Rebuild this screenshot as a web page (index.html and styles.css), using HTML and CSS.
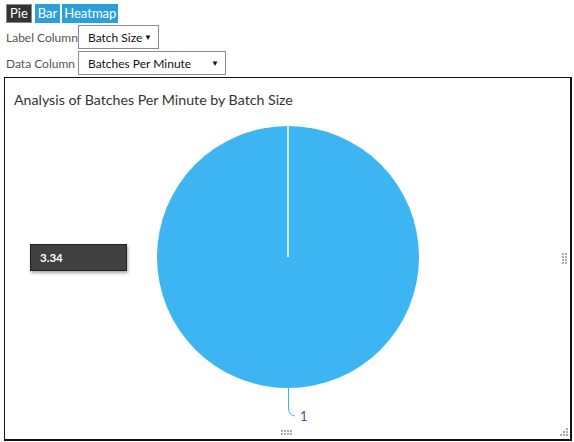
FILE: index.html
```html
<!DOCTYPE html>
<html>
<head>
<meta charset="utf-8">
<link rel="stylesheet" href="styles.css">
</head>
<body>
<div class="page">
  <div class="tabs">
    <span class="tab active">Pie</span>
    <span class="tab">Bar</span>
    <span class="tab tab-wide">Heatmap</span>
  </div>
  <div class="row">
    <span class="lbl">Label Column</span>
    <span class="select sel-label">Batch Size<span class="arrow">▼</span></span>
  </div>
  <div class="row">
    <span class="lbl">Data Column</span>
    <span class="select sel-data">Batches Per Minute<span class="arrow">▼</span></span>
  </div>
  <div class="chart">
    <div class="title">Analysis of Batches Per Minute by Batch Size</div>
    <svg class="pie" width="566" height="362" viewBox="0 0 566 362">
      <circle cx="283" cy="179" r="131" fill="#3db5f2"/>
      <line x1="283" y1="48" x2="283" y2="179" stroke="#ffffff" stroke-width="1.5"/>
      <path d="M283.5 310 L283.5 331 Q283.5 337 290 338" fill="none" stroke="#3db5f2" stroke-width="1"/>
      <text x="295" y="343" class="pielabel">1</text>
      <g fill="#aaaaaa">
        <rect x="557" y="175" width="2" height="2"/><rect x="560" y="175" width="2" height="2"/>
        <rect x="557" y="178" width="2" height="2"/><rect x="560" y="178" width="2" height="2"/>
        <rect x="557" y="181" width="2" height="2"/><rect x="560" y="181" width="2" height="2"/>
        <rect x="557" y="184" width="2" height="2"/><rect x="560" y="184" width="2" height="2"/>
        <rect x="276" y="352" width="2" height="2"/><rect x="279" y="352" width="2" height="2"/><rect x="282" y="352" width="2" height="2"/><rect x="285" y="352" width="2" height="2"/>
        <rect x="276" y="355" width="2" height="2"/><rect x="279" y="355" width="2" height="2"/><rect x="282" y="355" width="2" height="2"/><rect x="285" y="355" width="2" height="2"/>
        <rect x="561" y="350" width="2" height="2"/>
        <rect x="558" y="353" width="2" height="2"/><rect x="561" y="353" width="2" height="2"/>
        <rect x="555" y="356" width="2" height="2"/><rect x="558" y="356" width="2" height="2"/><rect x="561" y="356" width="2" height="2"/>
      </g>
    </svg>
    <div class="tooltip">3.34</div>
  </div>
</div>
</body>
</html>
```
FILE: styles.css
```css
html, body {
  margin: 0;
  padding: 0;
  background: #ffffff;
}
.page {
  padding: 4px 0 0 6px;
  font-family: Lato, "Noto Sans", sans-serif;
  font-size: 12px;
  color: #333333;
}
.tabs {
  display: flex;
  gap: 3px;
  height: 19px;
}
.tab {
  display: flex;
  align-items: center;
  padding: 0 3px;
  background: #2b9fd9;
  color: #ffffff;
  font-size: 13px;
  line-height: 19px;
}
.tab.active {
  background: #333333;
  border: 1px solid #888888;
  padding: 0 3px;
  box-sizing: border-box;
}
.tab-wide {
  padding: 0 2px;
  margin-left: -1px;
}
.row {
  display: flex;
  align-items: center;
  margin-top: 2px;
}
.lbl {
  flex: 0 0 72px;
  color: #555555;
  white-space: nowrap;
}
.select {
  flex: 0 0 auto;
  box-sizing: border-box;
  height: 24px;
  border: 1px solid #8a8a9a;
  display: flex;
  align-items: center;
  justify-content: space-between;
  padding: 0 6px 0 9px;
  color: #111111;
  white-space: nowrap;
}
.sel-label { width: 81px; }
.sel-data { width: 148px; }
.arrow {
  font-size: 8px;
  color: #111111;
}
.chart {
  position: relative;
  margin: 2px 0 0 -2px;
  width: 568px;
  height: 364px;
  box-sizing: border-box;
  border: 1px solid #111111;
  border-width: 1px 2px 2px 1px;
}
.title {
  font-size: 14.2px;
  color: #333333;
  padding: 13px 0 0 9px;
  line-height: 18px;
}
.pie {
  position: absolute;
  left: 0;
  top: 0;
}
.pielabel {
  font-family: Lato, sans-serif;
  font-size: 13px;
  fill: #5b4a8f;
}
.tooltip {
  position: absolute;
  left: 25px;
  top: 166px;
  width: 97px;
  height: 27px;
  box-sizing: border-box;
  background: #404040;
  border: 1px solid #222222;
  box-shadow: 1px 2px 3px rgba(0,0,0,0.35);
  color: #ffffff;
  font-weight: bold;
  font-size: 11.5px;
  line-height: 25px;
  padding-left: 9px;
}
```
